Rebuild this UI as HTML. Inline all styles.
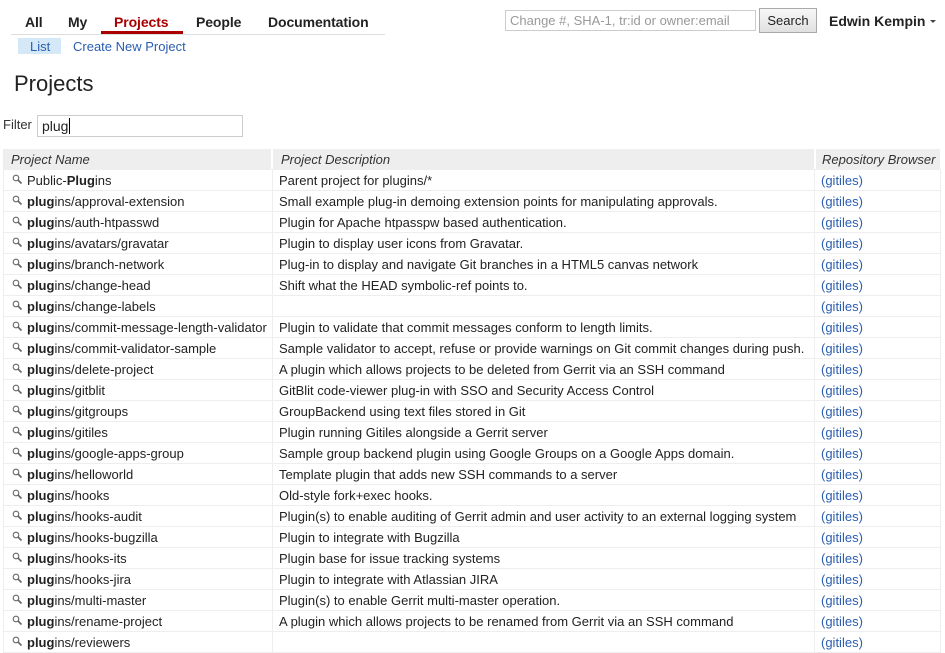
<!DOCTYPE html>
<html><head><style>
body{margin:0;background:#fff;font-family:"Liberation Sans",Arial,sans-serif;font-size:13px;color:#222;width:945px;height:634px;overflow:hidden;position:relative}
.a{position:absolute}
.tab{position:absolute;top:14px;font-weight:bold;font-size:14px;color:#222;letter-spacing:-0.1px}
a{color:#2a5db0;text-decoration:none}
table{position:absolute;left:3px;top:148px;border-collapse:collapse;width:938px}
td,th{height:20px;padding:0 0 0 6px;border:1px solid #eee;white-space:nowrap;font-size:13px}
th{background:#eee;font-weight:normal;font-style:italic;text-align:left;color:#333;border-color:#fff;border-left:2px solid #fff;padding-left:8px}
td.n{padding-left:8px}
.ic{display:inline-block;width:11px;margin-right:4px;vertical-align:0px}
</style></head><body>
<div class="tab" style="left:25px">All</div>
<div class="tab" style="left:68px">My</div>
<div class="tab" style="left:114px;color:#a00">Projects</div>
<div class="a" style="left:101px;top:31px;width:82px;height:3px;background:#a00"></div>
<div class="tab" style="left:196px">People</div>
<div class="tab" style="left:268px">Documentation</div>
<div class="a" style="left:11px;top:34px;width:374px;height:1px;background:#ddd"></div>
<div class="a" style="left:18px;top:38px;width:43px;height:16px;background:#d5e8f8"></div>
<div class="a" style="left:30px;top:39px;color:#2a5db0;font-size:13px">List</div>
<div class="a" style="left:73px;top:39px;color:#2a5db0;font-size:13px">Create New Project</div>
<div class="a" style="left:14px;top:71px;font-size:22px;color:#222">Projects</div>
<div class="a" style="left:3px;top:117px;color:#333">Filter</div>
<div class="a" style="left:37px;top:115px;border:1px solid #ccc;font-size:14px;line-height:20px;padding-left:4px;box-sizing:border-box;width:206px;height:22px">plug<span style="border-left:1px solid #000;margin-left:1px"></span></div>
<div class="a" style="left:505px;top:10px;width:251px;height:21px;border:1px solid #ccc;box-sizing:border-box;color:#999;font-size:13px;line-height:19px;padding-left:4px">Change #, SHA-1, tr:id or owner:email</div>
<div class="a" style="left:759px;top:8px;width:58px;height:25px;border:1px solid #aaa;box-sizing:border-box;background:linear-gradient(#f8f8f8,#e0e0e0);text-align:center;line-height:23px;color:#222">Search</div>
<div class="a" style="left:829px;top:13px;font-weight:bold;font-size:14px;color:#222">Edwin Kempin</div>
<div class="a" style="left:930px;top:20px;border:3px solid transparent;border-top:3px solid #444;width:0;height:0"></div>
<table>
<tr><th style="width:260px;border-left:none">Project Name</th><th style="width:533px">Project Description</th><th style="padding-left:6px">Repository Browser</th></tr>
</table>
<table id="t" style="top:169px"></table>
<script>
var rows=[["Public-<b>Plug</b>ins","Parent project for plugins/*"],
["approval-extension","Small example plug-in demoing extension points for manipulating approvals."],
["auth-htpasswd","Plugin for Apache htpasspw based authentication."],
["avatars/gravatar","Plugin to display user icons from Gravatar."],
["branch-network","Plug-in to display and navigate Git branches in a HTML5 canvas network"],
["change-head","Shift what the HEAD symbolic-ref points to."],
["change-labels",""],
["commit-message-length-validator","Plugin to validate that commit messages conform to length limits."],
["commit-validator-sample","Sample validator to accept, refuse or provide warnings on Git commit changes during push."],
["delete-project","A plugin which allows projects to be deleted from Gerrit via an SSH command"],
["gitblit","GitBlit code-viewer plug-in with SSO and Security Access Control"],
["gitgroups","GroupBackend using text files stored in Git"],
["gitiles","Plugin running Gitiles alongside a Gerrit server"],
["google-apps-group","Sample group backend plugin using Google Groups on a Google Apps domain."],
["helloworld","Template plugin that adds new SSH commands to a server"],
["hooks","Old-style fork+exec hooks."],
["hooks-audit","Plugin(s) to enable auditing of Gerrit admin and user activity to an external logging system"],
["hooks-bugzilla","Plugin to integrate with Bugzilla"],
["hooks-its","Plugin base for issue tracking systems"],
["hooks-jira","Plugin to integrate with Atlassian JIRA"],
["multi-master","Plugin(s) to enable Gerrit multi-master operation."],
["rename-project","A plugin which allows projects to be renamed from Gerrit via an SSH command"],
["reviewers",""]];
var ic='<svg class="ic" width="11" height="11" viewBox="0 0 11 11"><circle cx="4" cy="4" r="2.8" fill="none" stroke="#666" stroke-width="1.1"/><path d="M6 6L9.5 9.5" stroke="#666" stroke-width="1.6"/></svg>';
var h='';rows.forEach(function(r,i){var n=i?'<b>plug</b>ins/'+r[0]:r[0];
h+='<tr><td class="n" style="width:260px">'+ic+n+'</td><td style="width:535px">'+r[1]+'</td><td><a>(gitiles)</a></td></tr>';});
document.getElementById('t').innerHTML=h;
</script>
</body></html>
